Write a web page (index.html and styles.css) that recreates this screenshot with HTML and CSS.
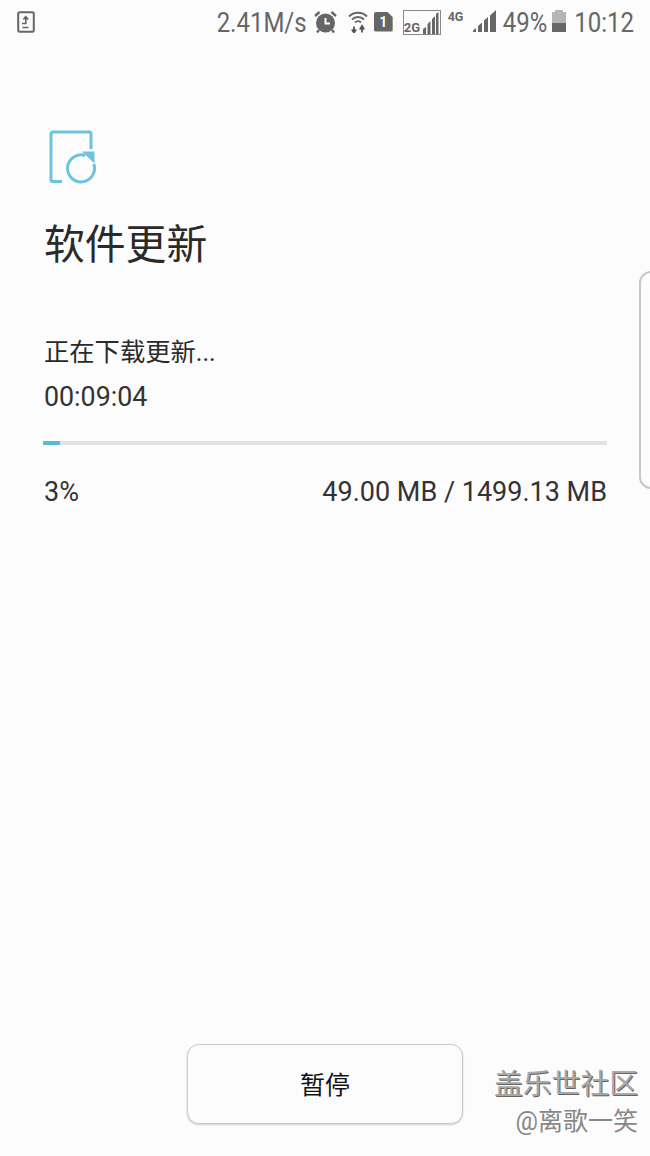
FILE: index.html
```html
<!DOCTYPE html>
<html lang="zh-CN">
<head>
  <meta charset="UTF-8" />
  <title>软件更新</title>
  <link rel="stylesheet" href="styles.css">
</head>
<body>

<div id="page">
  <div id="status-bar">
    <svg class="icon-update" width="18" height="22" viewBox="0 0 18 22">
      <rect x="1.200" y="1.200" width="15.600" height="19.600" rx="1.500" fill="none" stroke="#666" stroke-width="2"/>
      <path d="M5 12.500h3.800V6.500M6.400 8.500l2.400-3 2.400 3M5.500 16.500h6" fill="none" stroke="#666" stroke-width="1.600"/>
    </svg>
    <span class="bar-text speed">2.41M/s</span>
    <svg class="icon-alarm" width="23" height="22" viewBox="0 0 23 22">
      <circle cx="11.500" cy="12" r="9.500" fill="#666"/>
      <path d="M11.500 7v5.500h4.500" fill="none" stroke="#fcfcfc" stroke-width="2"/>
      <path d="M1 5l4.500-4M22 5l-4.500-4M5 19l-2 2.500M18 19l2 2.500" stroke="#666" stroke-width="2.400" fill="none"/>
    </svg>
    <svg class="icon-wifi" width="20" height="23" viewBox="0 0 20 23">
      <path d="M1 6.500C6 1.500 14 1.500 19 6.500M4 9.500c3.500-3.500 8.500-3.500 12 0M7 12.500c1.700-1.700 4.300-1.700 6 0" fill="none" stroke="#666" stroke-width="2"/>
      <path d="M6 22.500v-6M3.800 19.500L6 22.500l2.200-3M14 22.500v-6M11.800 19.500L14 16l2.200 3.500" fill="none" stroke="#555" stroke-width="1.800"/>
    </svg>
    <div class="sim">1</div>
    <div class="net-box">
      <span class="net-2g">2G</span>
      <svg class="bars-2g" width="16" height="22" viewBox="0 0 16 22">
        <path d="M0 22v-5l3-2v7zM4.500 22V12l3-3v13zM9 22V7l3-3v18zM13 22V2l2.500-2v22z" fill="#666"/>
      </svg>
    </div>
    <span class="net-4g">4G</span>
    <svg class="icon-signal" width="23" height="22" viewBox="0 0 23 22">
      <path d="M0 22v-1.500l3-2.500v4zM5 22v-6l4-3.500V22zM11 22V10.500l4-3.500v15zM17 22V5.500L23 0v22z" fill="#666"/>
    </svg>
    <span class="bar-text battery-text">49%</span>
    <div class="battery">
      <div class="battery-nub"></div>
      <div class="battery-body"><div class="battery-fill"></div></div>
    </div>
    <span class="bar-text clock">10:12</span>
  </div>

  <div id="content">
    <svg class="update-icon" width="48" height="54" viewBox="0 0 48 54">
      <path d="M13 51.500H4a2 2 0 0 1-2-2V4a2 2 0 0 1 2-2h36a2 2 0 0 1 2 2v15" fill="none" stroke="#6cc3de" stroke-width="3"/>
      <path d="M36 25.500A13.500 13.500 0 1 0 44.800 34" fill="none" stroke="#6cc3de" stroke-width="3"/>
      <path d="M33 21.500h12.500v12z" fill="#6cc3de"/>
    </svg>
    <h1>软件更新</h1>
    <div class="status-text">正在下载更新...</div>
    <div class="time-left">00:09:04</div>
    <div class="progress"><div class="progress-fill" style="width: 3%"></div></div>
    <div class="progress-info">
      <span>3%</span>
      <span>49.00 MB / 1499.13 MB</span>
    </div>
  </div>

  <div id="footer">
    <button class="pause-btn">暂停</button>
  </div>
</div>

<div class="edge-handle"></div>
<div class="watermark">
  <div class="wm-title">盖乐世社区</div>
  <div class="wm-user">@离歌一笑</div>
</div>

</body>
</html>
```

FILE: styles.css
```css
html, body {
  margin: 0;
  padding: 0;
}
body {
  font-family: Roboto, "Noto Sans CJK SC", sans-serif;
  background: #fcfcfc;
  color: #2a2a2a;
  overflow: hidden;
}
#page {
  height: 1156px;
  display: flex;
  flex-direction: column;
}
#status-bar {
  height: 46px;
  box-sizing: border-box;
  padding: 0 16px 0 17px;
  display: flex;
  align-items: center;
  color: #666;
  font-size: 24px;
}
.bar-text {
  display: inline-block;
  transform: scaleY(1.12);
}
.icon-update {
  margin-bottom: 2px;
}
.speed {
  margin-left: auto;
}
.icon-alarm {
  margin: 0 0 2px 7px;
}
.icon-wifi {
  margin: 0 0 4px 11px;
}
.sim {
  width: 19px;
  height: 20px;
  margin: -3px 0 0 6px;
  background: #666;
  color: #fcfcfc;
  font-size: 14px;
  font-weight: 700;
  line-height: 20px;
  text-align: center;
  border-radius: 2px;
  clip-path: polygon(0 0, 70% 0, 100% 28%, 100% 100%, 0 100%);
}
.net-box {
  width: 38px;
  height: 25px;
  box-sizing: border-box;
  margin: 0 0 1px 10px;
  border: 1px solid #888;
  display: flex;
  align-items: flex-end;
  justify-content: space-between;
  padding-right: 1px;
}
.net-2g {
  font-size: 13px;
  font-weight: 700;
  line-height: 13px;
}
.net-4g {
  font-size: 12.500px;
  font-weight: 700;
  margin-left: 7px;
  margin-bottom: 14px;
  width: 19px;
}
.icon-signal {
  margin: 0 0 4px 6px;
}
.battery-text {
  margin-left: 7px;
}
.battery {
  width: 14px;
  margin: 0 0 4px 5px;
  display: flex;
  flex-direction: column;
  align-items: center;
}
.battery-nub {
  width: 8px;
  height: 2px;
  background: #b5b5b5;
}
.battery-body {
  width: 100%;
  height: 20px;
  background: #b5b5b5;
  display: flex;
  align-items: flex-end;
}
.battery-fill {
  width: 100%;
  height: 9px;
  background: #666;
}
.clock {
  margin-left: 8px;
}
#content {
  padding: 84px 43px 0 44px;
  flex: 1;
}
.update-icon {
  display: block;
  margin-left: 5px;
}
h1 {
  margin: 33px 0 0;
  font-size: 40.800px;
  font-weight: 400;
  line-height: 56px;
}
.status-text {
  margin-top: 63px;
  font-size: 25.300px;
  line-height: 34px;
}
.time-left {
  margin-top: 10px;
  font-size: 26.800px;
  line-height: 34px;
  color: #333;
}
.progress {
  height: 4px;
  margin: 27px 0 0 -1px;
  background: #e2e2e2;
}
.progress-fill {
  height: 100%;
  background: #5dbad6;
}
.progress-info {
  margin-top: 30px;
  display: flex;
  justify-content: space-between;
  font-size: 27px;
  line-height: 34px;
  color: #333;
}
#footer {
  padding-bottom: 32px;
  display: flex;
  justify-content: center;
}
.pause-btn {
  width: 276px;
  height: 80px;
  padding: 0 0 2px;
  background: #fcfcfc;
  border: 1px solid #c9c9c9;
  border-radius: 12px;
  box-shadow: 0 1px 2px #ccc;
  font-family: Roboto, "Noto Sans CJK SC", sans-serif;
  font-size: 25px;
  color: #111;
}
.edge-handle {
  position: absolute;
  top: 271px;
  right: -20px;
  width: 27px;
  height: 214px;
  border: 2px solid #c8c8c8;
  border-radius: 12px;
}
.watermark {
  position: absolute;
  top: 1066px;
  right: 12px;
  text-align: right;
  color: #a8a8a8;
}
.wm-title {
  font-size: 28.800px;
  line-height: 36px;
  text-shadow: 1px 1px 0 #666;
}
.wm-user {
  margin-top: 2px;
  font-size: 25px;
  line-height: 36px;
  color: #888;
}
```
